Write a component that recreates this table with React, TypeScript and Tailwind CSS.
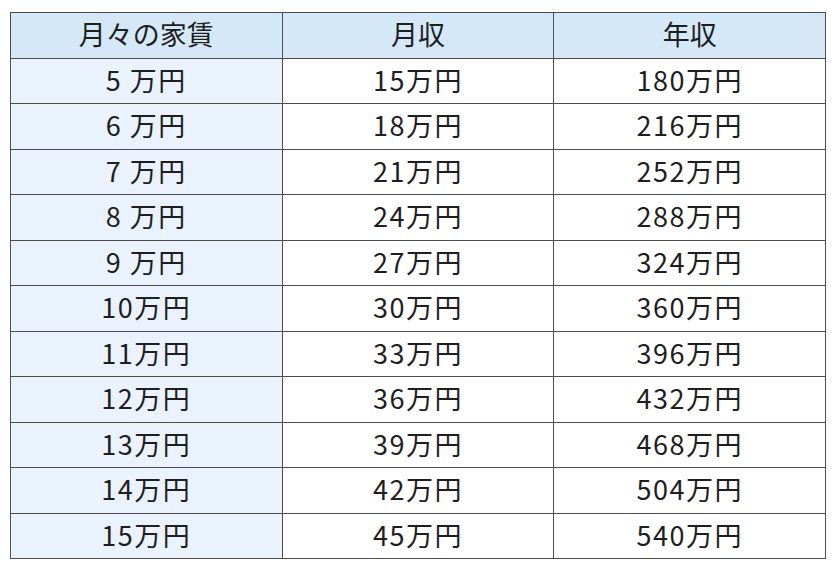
const rows: [string, string, string][] = [
  ["5 万円", "15万円", "180万円"],
  ["6 万円", "18万円", "216万円"],
  ["7 万円", "21万円", "252万円"],
  ["8 万円", "24万円", "288万円"],
  ["9 万円", "27万円", "324万円"],
  ["10万円", "30万円", "360万円"],
  ["11万円", "33万円", "396万円"],
  ["12万円", "36万円", "432万円"],
  ["13万円", "39万円", "468万円"],
  ["14万円", "42万円", "504万円"],
  ["15万円", "45万円", "540万円"],
];

const cell = "border-[1.5px] border-[#4d4d4d] text-center align-middle h-[45.5px] p-0 pb-[3px]";

export default function App() {
  return (
    <div
      className="w-[838px] h-[571px] bg-white pt-[12px] pl-[10px] text-[#1e1e1e] text-[27px] leading-none"
      style={{ fontFamily: '"Noto Sans CJK JP", "Noto Sans", sans-serif' }}
    >
      <table className="w-[816px] border-collapse table-fixed">
        <thead>
          <tr className="bg-[#d5e8f8]">
            <th className={`${cell} font-normal`}>月々の家賃</th>
            <th className={`${cell} font-normal`}>月収</th>
            <th className={`${cell} font-normal`}>年収</th>
          </tr>
        </thead>
        <tbody className="tracking-[1.5px]">
          {rows.map((r) => (
            <tr key={r[0]}>
              <td className={`${cell} bg-[#eaf3fd]`}>{r[0]}</td>
              <td className={cell}>{r[1]}</td>
              <td className={cell}>{r[2]}</td>
            </tr>
          ))}
        </tbody>
      </table>
    </div>
  );
}
